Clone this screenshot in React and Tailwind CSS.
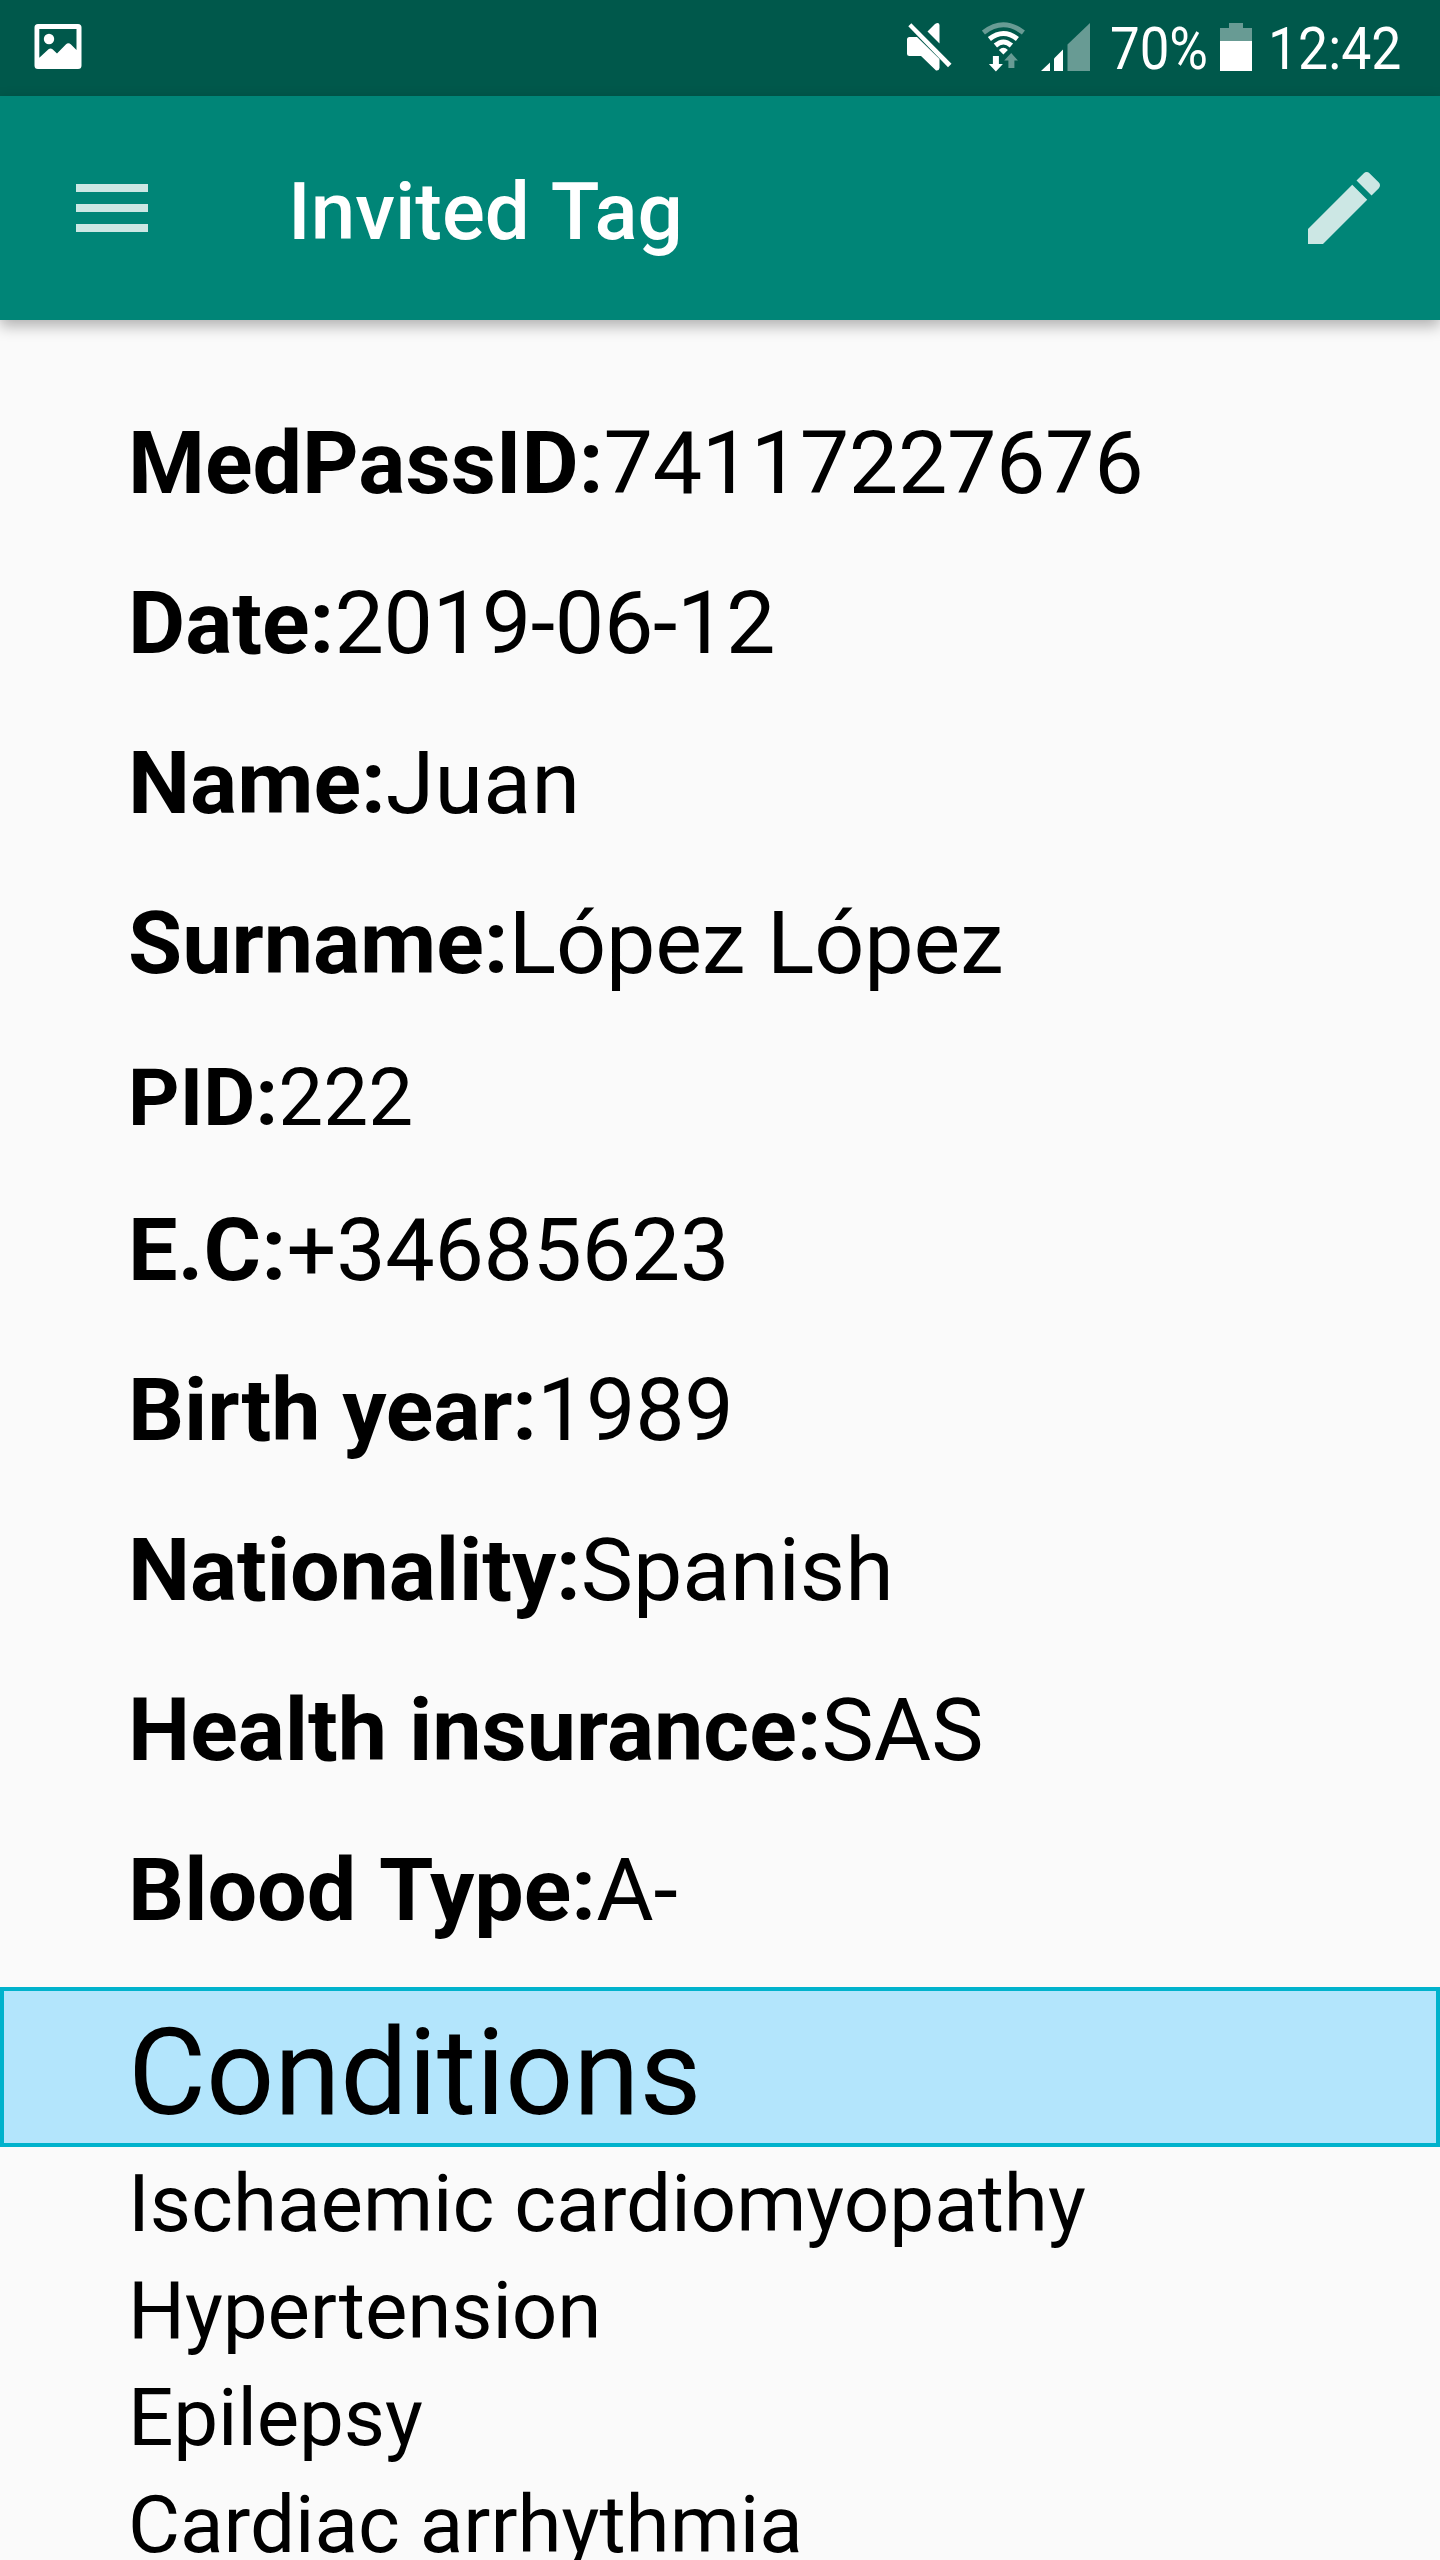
const fields = [
  { label: 'MedPassID:', value: '74117227676', valueClass: 'tracking-[-0.4px]' },
  { label: 'Date:', value: '2019-06-12', valueClass: 'tracking-[-0.35px]' },
  { label: 'Name:', value: 'Juan', valueClass: 'tracking-[0.25px]' },
  { label: 'Surname:', value: 'López López', valueClass: 'tracking-[-0.15px]' },
  { label: 'PID:', value: '222', small: true, labelClass: 'tracking-[0.2px]' },
  { label: 'E.C:', value: '+34685623', labelClass: 'tracking-[0.3px]', valueClass: 'tracking-[-0.35px]' },
  { label: 'Birth year:', value: '1989', labelClass: 'tracking-[-0.1px]', valueClass: 'tracking-[-0.4px]' },
  { label: 'Nationality:', value: 'Spanish', labelClass: 'tracking-[-0.08px]', valueClass: 'tracking-[-0.1px]' },
  { label: 'Health insurance:', value: 'SAS' },
  { label: 'Blood Type:', value: 'A-', labelClass: '[word-spacing:3px]' },
];

const conditions = [
  { name: 'Ischaemic cardiomyopathy' },
  { name: 'Hypertension', className: 'tracking-[-0.1px]' },
  { name: 'Epilepsy', className: 'tracking-[-0.15px]' },
  { name: 'Cardiac arrhythmia' },
];

function PictureIcon() {
  return (
    <svg className="ml-[34px] mt-6 h-[46px] w-12 shrink-0" viewBox="0 0 48 46" fill="#fff">
      <path
        fillRule="evenodd"
        d="M4 0H44Q47.5 0 47.5 3.5V41.500Q47.500 45 44 45H4Q.5 45 .5 41.500V3.500Q.5 0 4 0ZM5.300 5V33.800L14.500 25.200Q16.500 23.600 18.500 25.200L23 29.500L31.800 20.500Q34.300 18 37 20.500L42.500 26V5Z"
      />
      <circle cx="15" cy="15" r="5.200" />
    </svg>
  );
}

function MutedIcon() {
  return (
    <svg className="h-[50px] w-[46px]" viewBox="0 0 46 50" fill="#fff">
      <path d="M1 17.500Q1 15 3.500 15H11L33.500 37V46Q33 49 30 48.500L15 34H3.500Q1 34 1 31.500Z" />
      <path d="M21.500 9.500L29 2Q33 -.5 33.500 3V21.500Z" />
      <path d="M2.300 4.300L5.300 1.300L45.500 41.700L42 45.200Z" />
    </svg>
  );
}

function WifiIcon() {
  return (
    <svg className="h-[50px] w-11" viewBox="0.6 0 44 50" fill="none" stroke="#fff" strokeWidth="5">
      <path d="M2 10.500Q22 -5 42 10.500" stroke="#689b94" />
      <path d="M8 17Q22 6 36 17" />
      <path d="M14 23.500Q22 16.500 30 23.500" />
      <path d="M17.500 28Q22 23.500 26.500 28L22 32.500Z" fill="#fff" stroke="none" />
      <path d="M11.500 34H17.500V42H21.500L14.500 49.500L7.500 42H11.500Z" fill="#fff" stroke="none" />
      <path d="M27 46H33V38.500H36.500L29.800 31L22.800 38.500H27Z" fill="#689b94" stroke="none" />
    </svg>
  );
}

function SignalIcon() {
  return (
    <svg className="h-[49px] w-[50px]" viewBox="0 0 50 49" fill="#fff">
      <path d="M0 48L9 39.500V48Z" />
      <path d="M13 35.500L22 26.500V48H13Z" />
      <path d="M26.500 21.500L49 0V48H26.500Z" fill="#689b94" />
    </svg>
  );
}

function BatteryIcon() {
  return (
    <svg className="h-[49px] w-8" viewBox="0 0 32 49">
      <path d="M9 0H23V5H32V18H0V5H9Z" fill="#689b94" />
      <path d="M0 18H32V48H0Z" fill="#fff" />
    </svg>
  );
}

export default function App() {
  return (
    <div className="h-[2560px] w-[1440px] overflow-hidden bg-[#fafafa] font-['Roboto',sans-serif] text-black">
      <div className="flex h-24 items-start bg-[#00584b] text-white">
        <PictureIcon />
        <div className="ml-auto flex h-24 items-start">
          <div className="mt-[22px] w-[76px]"><MutedIcon /></div>
          <div className="mt-[22px] w-[59px]"><WifiIcon /></div>
          <div className="mt-[23px] w-[69px]"><SignalIcon /></div>
          <div className="h-24 w-[110px]">
            <span className="inline-block origin-left scale-x-[.88] whitespace-nowrap text-[60px] leading-[98px]">70%</span>
          </div>
          <div className="mt-[23px] w-[48px]"><BatteryIcon /></div>
          <div className="h-24 w-[172px]">
            <span className="inline-block origin-left scale-x-[.893] whitespace-nowrap text-[60px] leading-[98px]">12:42</span>
          </div>
        </div>
      </div>
      <header className="relative flex h-56 items-start bg-[#008577] text-white shadow-[0_6px_14px_rgba(0,0,0,0.3)]">
        <div className="ml-[76px] mt-[88px] flex h-12 w-[72px] flex-col justify-between">
          <div className="h-2 bg-[#cce7e4]" />
          <div className="h-2 bg-[#cce7e4]" />
          <div className="h-2 bg-[#cce7e4]" />
        </div>
        <h1 className="ml-[140px] mt-[4px] h-[220px] whitespace-nowrap text-[80px] font-medium leading-[224px] [word-spacing:3px]">
          Invited Tag
        </h1>
        <svg className="ml-auto mr-[48px] mt-[64px] h-24 w-24" viewBox="0 0 24 24" fill="#cce7e4">
          <path d="M3 17.250V21h3.750L17.810 9.940l-3.750-3.750L3 17.250zM20.710 7.040c.39-.39.39-1.020 0-1.410l-2.340-2.340c-.39-.39-1.020-.39-1.410 0l-1.830 1.830 3.750 3.750 1.830-1.830z" />
        </svg>
      </header>
      <main>
        <div className="px-32 pt-[63px]">
          {fields.map(({ label, value, small, labelClass, valueClass }) => (
            <p
              key={label}
              className={
                small
                  ? 'h-[147px] whitespace-nowrap text-[80px] leading-[151px]'
                  : 'h-[160px] whitespace-nowrap text-[88px] leading-[160px]'
              }
            >
              <b className={labelClass}>{label}</b>
              <span className={valueClass}>{value}</span>
            </p>
          ))}
        </div>
        <h2 className="mt-[17px] h-[160px] border-4 border-[#00b2cc] bg-[#b3e5fc] px-[124px] text-[120px] leading-[165px] tracking-[-0.15px]">
          Conditions
        </h2>
        <ul className="px-32 pt-1">
          {conditions.map(({ name, className }) => (
            <li key={name} className="h-[107px] whitespace-nowrap text-[80px] leading-[107px]">
              <span className={className}>{name}</span>
            </li>
          ))}
        </ul>
      </main>
    </div>
  );
}
